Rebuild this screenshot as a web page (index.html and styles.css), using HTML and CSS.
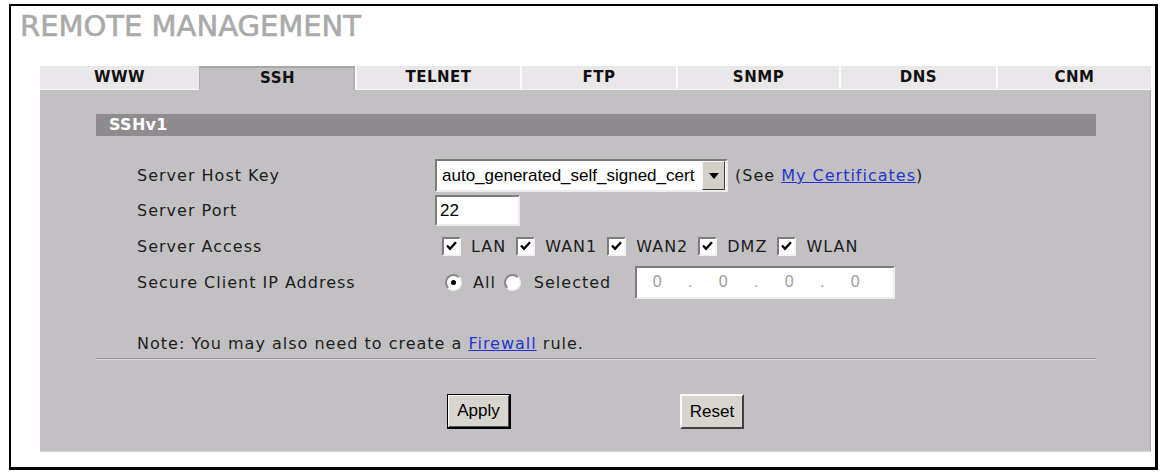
FILE: index.html
```html
<!DOCTYPE html>
<html lang="en">
<head>
<meta charset="utf-8">
<title>Remote Management - SSH</title>
<link rel="stylesheet" href="styles.css">
</head>
<body>
<div class="frame">
  <h1 class="title">REMOTE MANAGEMENT</h1>
  <div class="tabs">
    <div class="tab">WWW</div>
    <div class="tab active">SSH</div>
    <div class="tab">TELNET</div>
    <div class="tab">FTP</div>
    <div class="tab">SNMP</div>
    <div class="tab">DNS</div>
    <div class="tab">CNM</div>
  </div>
  <div class="panel">
    <div class="section-head">SSHv1</div>
    <div class="form">
      <div class="label">Server Host Key</div>
      <div class="ctrl">
        <div class="select">
          <span class="select-text">auto_generated_self_signed_cert</span>
          <span class="select-btn"><span class="arrow"></span></span>
        </div>
        <span class="see">(See <a href="#" class="link">My Certificates</a>)</span>
      </div>

      <div class="label">Server Port</div>
      <div class="ctrl">
        <div class="textbox">22</div>
      </div>

      <div class="label">Server Access</div>
      <div class="ctrl checks">
        <span class="cb"><svg viewBox="0 0 15 15" width="15" height="15"><path d="M3 6.5 L6 9.8 L12 3.2" fill="none" stroke="#000" stroke-width="2.4"/></svg></span>
        <span class="opt">LAN</span>
        <span class="cb"><svg viewBox="0 0 15 15" width="15" height="15"><path d="M3 6.5 L6 9.8 L12 3.2" fill="none" stroke="#000" stroke-width="2.4"/></svg></span>
        <span class="opt">WAN1</span>
        <span class="cb"><svg viewBox="0 0 15 15" width="15" height="15"><path d="M3 6.5 L6 9.8 L12 3.2" fill="none" stroke="#000" stroke-width="2.4"/></svg></span>
        <span class="opt">WAN2</span>
        <span class="cb"><svg viewBox="0 0 15 15" width="15" height="15"><path d="M3 6.5 L6 9.8 L12 3.2" fill="none" stroke="#000" stroke-width="2.4"/></svg></span>
        <span class="opt">DMZ</span>
        <span class="cb"><svg viewBox="0 0 15 15" width="15" height="15"><path d="M3 6.5 L6 9.8 L12 3.2" fill="none" stroke="#000" stroke-width="2.4"/></svg></span>
        <span class="opt">WLAN</span>
      </div>

      <div class="label">Secure Client IP Address</div>
      <div class="ctrl">
        <span class="radio first"><span class="dot"></span></span>
        <span class="opt all">All</span>
        <span class="radio second"></span>
        <span class="opt selected">Selected</span>
        <div class="ipbox">
          <span class="oct">0</span><span class="ipdot">.</span>
          <span class="oct">0</span><span class="ipdot">.</span>
          <span class="oct">0</span><span class="ipdot">.</span>
          <span class="oct">0</span>
        </div>
      </div>
    </div>
    <p class="note">Note: You may also need to create a <a href="#" class="link">Firewall</a> rule.</p>
    <div class="sep"></div>
    <div class="buttons">
      <button class="btn btn-default" type="button">Apply</button>
      <button class="btn" type="button">Reset</button>
    </div>
  </div>
</div>
</body>
</html>
```
FILE: styles.css
```css
html, body {
  margin: 0;
  padding: 0;
  background: #ffffff;
}
body {
  width: 1162px;
  height: 473px;
  overflow: hidden;
  font-family: "DejaVu Sans", Verdana, sans-serif;
  color: #1c1c1c;
}
.frame {
  box-sizing: border-box;
  width: 1149px;
  height: 466px;
  margin: 4px 0 0 9px;
  border-style: solid;
  border-color: #000;
  border-width: 2px 3px 3px 2px;
  background: #fff;
}
.title {
  margin: 4px 0 0 9px;
  font: normal 29px/33px "DejaVu Sans", Verdana, sans-serif;
  color: #aaaaaa;
  -webkit-text-stroke: 0.6px #aaaaaa;
}
.tabs {
  display: grid;
  grid-template-columns: 159px 156px 165px 156px 163px 157px 155px;
  width: 1111px;
  height: 24px;
  margin: 23px 0 0 29px;
}
.tab {
  box-sizing: border-box;
  background: #e9e7e9;
  border-left: 2px solid #fafafa;
  border-bottom: 1px solid #f8f8f8;
  font: bold 15px/23px "DejaVu Sans", Verdana, sans-serif;
  letter-spacing: 0.5px;
  text-align: center;
  color: #111;
}
.tab:first-child {
  border-left: 0;
}
.tab.active {
  background: #c3c0c4;
  border-bottom: 0;
  border-left: 1px solid #b3b0b4;
  box-shadow: inset 0 2px 0 #a9a6aa, inset -2px 0 0 #b6b3b7;
  line-height: 24px;
}
.panel {
  box-sizing: border-box;
  width: 1111px;
  height: 362px;
  margin-left: 29px;
  padding-top: 24px;
  background: #c3c0c4;
  border-right: 1px solid #aeabaf;
  border-bottom: 1px solid #d6d4d6;
  overflow: hidden;
}
.section-head {
  box-sizing: border-box;
  width: 1000px;
  height: 22px;
  margin-left: 56px;
  padding-left: 13px;
  background: #8f8b8f;
  color: #fff;
  font: bold 16px/22px "DejaVu Sans", Verdana, sans-serif;
  letter-spacing: 0.3px;
}
.form {
  display: grid;
  grid-template-columns: 298px auto;
  grid-template-rows: 35px 35px 36px 36px;
  align-items: center;
  margin: 22px 0 0 97px;
}
.label {
  font-size: 16px;
  letter-spacing: 1px;
  color: #1c1c1c;
}
.ctrl {
  display: flex;
  align-items: center;
}
.select {
  box-sizing: border-box;
  display: flex;
  width: 293px;
  height: 33px;
  border: 2px solid;
  border-color: #7c7c7c #ececec #ececec #7c7c7c;
  background: #fff;
}
.select-text {
  flex: 1;
  padding-left: 5px;
  font: 17px/29px "Liberation Sans", Arial, sans-serif;
  color: #000;
  white-space: nowrap;
}
.select-btn {
  box-sizing: border-box;
  display: flex;
  align-items: center;
  justify-content: center;
  width: 23px;
  margin-right: 1px;
  background: #d4d0c8;
  border: 1px solid;
  border-color: #f4f4f4 #404040 #404040 #f4f4f4;
}
.arrow {
  width: 0;
  height: 0;
  border-left: 5px solid transparent;
  border-right: 5px solid transparent;
  border-top: 6px solid #000;
}
.see {
  margin-left: 7px;
  font-size: 16px;
  letter-spacing: 1px;
}
.link {
  color: #2236cf;
  text-decoration: underline;
}
.textbox {
  box-sizing: border-box;
  width: 85px;
  height: 31px;
  padding-left: 3px;
  border: 2px solid;
  border-color: #7c7c7c #ececec #ececec #7c7c7c;
  background: #fff;
  font: 17px/27px "Liberation Sans", Arial, sans-serif;
  color: #000;
}
.checks {
  gap: 10px;
  padding-left: 7px;
}
.cb {
  box-sizing: border-box;
  display: flex;
  align-items: center;
  justify-content: center;
  width: 19px;
  height: 19px;
  border: 2px solid;
  border-color: #7c7c7c #f2f2f2 #f2f2f2 #7c7c7c;
  background: #fff;
}
.opt {
  font-size: 16px;
  letter-spacing: 1px;
  color: #1c1c1c;
}
.radio {
  box-sizing: border-box;
  display: flex;
  align-items: center;
  justify-content: center;
  width: 17px;
  height: 17px;
  border-radius: 50%;
  border: 2px solid;
  border-color: #888 #f4f4f4 #f4f4f4 #888;
  background: #fff;
}
.radio.first {
  margin-left: 10px;
}
.dot {
  width: 5px;
  height: 5px;
  border-radius: 50%;
  background: #000;
}
.all {
  margin-left: 11px;
}
.radio.second {
  margin-left: 8px;
}
.selected {
  margin-left: 13px;
}
.ipbox {
  box-sizing: border-box;
  display: flex;
  align-items: center;
  width: 260px;
  height: 33px;
  margin-left: 24px;
  padding-left: 10px;
  border: 2px solid;
  border-color: #7c7c7c #ececec #ececec #7c7c7c;
  background: #fff;
  font: 16px "Liberation Sans", Arial, sans-serif;
  color: #9c9c9c;
}
.oct {
  width: 20px;
  text-align: center;
}
.ipdot {
  width: 46px;
  text-align: center;
}
.note {
  margin: 34px 0 0 97px;
  font-size: 16px;
  line-height: 20px;
  letter-spacing: 1px;
  color: #1c1c1c;
}
.sep {
  width: 1000px;
  height: 1px;
  margin: 4px 0 0 56px;
  background: #9a969a;
  border-bottom: 1px solid #d9d6d9;
}
.buttons {
  display: flex;
  gap: 169px;
  margin-top: 34px;
  padding-left: 407px;
}
.btn {
  box-sizing: border-box;
  width: 64px;
  height: 35px;
  padding: 0;
  background: #d8d5cf;
  border: 2px solid;
  border-color: #fbfbfb #404040 #404040 #fbfbfb;
  font: 17px "Liberation Sans", Arial, sans-serif;
  color: #000;
}
.btn-default {
  border: 1px solid #000;
  border-right-width: 2px;
  border-bottom-width: 2px;
  box-shadow: inset 1px 1px 0 #fbfbfb, inset -1px -1px 0 #555;
}
```
